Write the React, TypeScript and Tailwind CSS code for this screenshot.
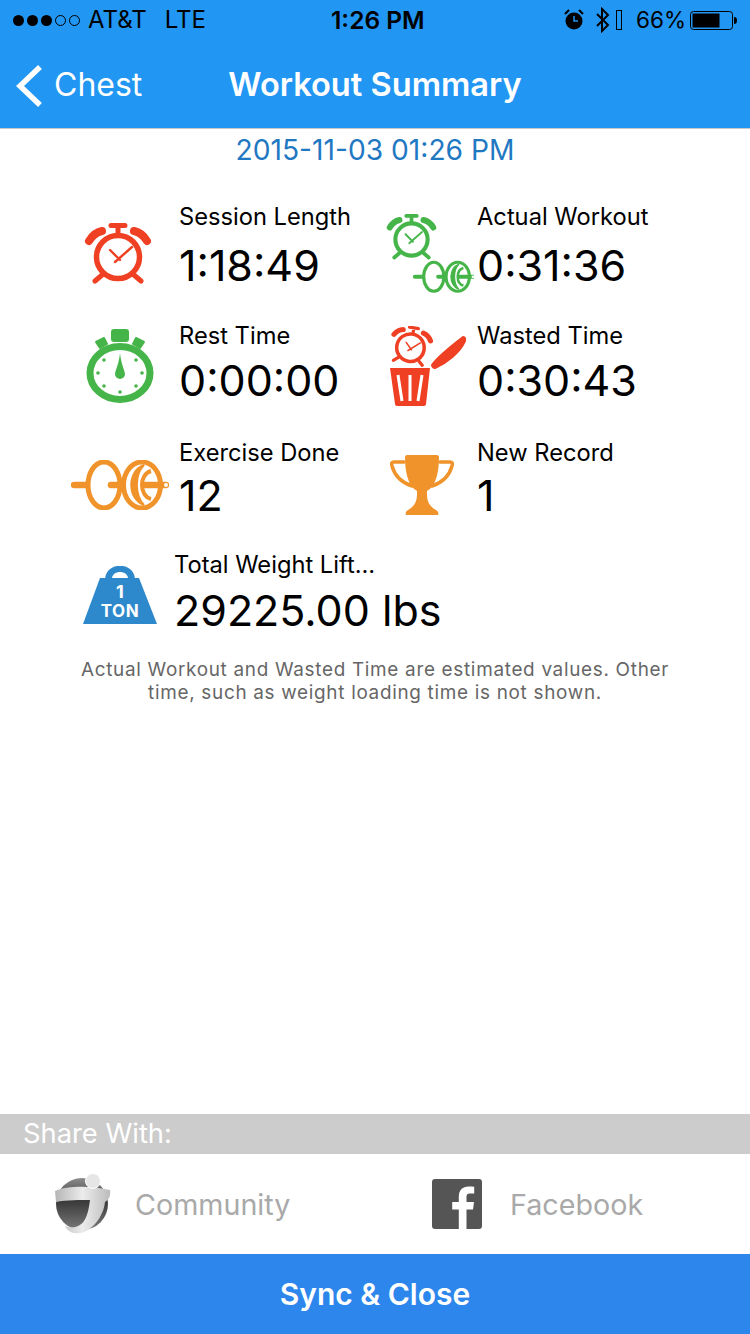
import type { ReactNode } from 'react';

const FONT = "font-['Inter','Noto_Sans',sans-serif]";

function AlarmClock({ color }: { color: string }) {
  return (
    <g>
      <circle cx="34" cy="34" r="21.5" fill="#fff" stroke={color} strokeWidth="5.5" />
      <path d="M5 18 C8 13 13 9 18 8" fill="none" stroke={color} strokeWidth="8" strokeLinecap="round" />
      <path d="M63 18 C60 13 55 9 50 8" fill="none" stroke={color} strokeWidth="8" strokeLinecap="round" />
      <path d="M34 12 V3 M27 2.5 H41" stroke={color} strokeWidth="5" strokeLinecap="round" fill="none" />
      <path d="M18 52 L11 58 M50 52 L57 58" stroke={color} strokeWidth="5" strokeLinecap="round" />
      <path d="M26 27 L36 37 M31 39 L48 24" stroke={color} strokeWidth="2.4" strokeLinecap="round" fill="none" />
    </g>
  );
}

function Barbell({ color }: { color: string }) {
  return (
    <g fill="none" stroke={color}>
      <path d="M3 25 H18" strokeWidth="6.5" strokeLinecap="round" />
      <ellipse cx="33" cy="25" rx="16" ry="23" strokeWidth="5" fill="#fff" />
      <path d="M40 25 H55" strokeWidth="6.5" strokeLinecap="round" />
      <ellipse cx="71" cy="25" rx="18.5" ry="23" strokeWidth="5" fill="#fff" />
      <path d="M73 5 C56 11 56 39 73 45 C64 36 63 15 73 5Z" fill={color} strokeWidth="2" />
      <path d="M80 11 C68 14 68 36 80 39" strokeWidth="4" />
      <path d="M74 25 H95" strokeWidth="6.5" strokeLinecap="round" />
      <circle cx="95" cy="25" r="2" fill="#fff" stroke="none" />
    </g>
  );
}

function SessionIcon() {
  return (
    <svg width="68" height="61" viewBox="0 0 68 61">
      <AlarmClock color="#ef4023" />
    </svg>
  );
}

function ActualIcon() {
  return (
    <svg width="88" height="79" viewBox="0 0 88 79">
      <g transform="scale(0.75)">
        <AlarmClock color="#46b549" />
      </g>
      <g transform="translate(27,47) scale(0.63)">
        <Barbell color="#46b549" />
      </g>
    </svg>
  );
}

function RestIcon() {
  return (
    <svg width="68" height="74" viewBox="0 0 68 74">
      <rect x="25" y="0" width="18" height="13" rx="3" fill="#46b549" />
      <path d="M10 13 L18 9 L21 15 L14 19Z M58 13 L50 9 L47 15 L54 19Z" fill="#46b549" stroke="#46b549" strokeWidth="2" strokeLinejoin="round" />
      <ellipse cx="34" cy="44" rx="30" ry="26.5" fill="none" stroke="#46b549" strokeWidth="7" />
      <path d="M34 24 C35 35 39 42 39 45 A5 5 0 0 1 29 45 C29 42 33 35 34 24Z" fill="#46b549" />
      {[[18, 31], [50, 31], [12, 44], [56, 44], [18, 57], [50, 57], [34, 63]].map(([x, y]) => (
        <circle key={`${x}-${y}`} cx={x} cy={y} r="1.8" fill="#46b549" />
      ))}
    </svg>
  );
}

function WastedIcon() {
  return (
    <svg width="78" height="80" viewBox="0 0 78 80">
      <g transform="translate(1,0) rotate(10 22 20) scale(0.64)">
        <AlarmClock color="#ef4023" />
      </g>
      <path d="M44 39 C48 33 62 21 75 11 C77 11 78 13 77 15 C72 26 60 36 47 42 C45 42 44 40 44 39Z" fill="#ef4023" stroke="#ef4023" strokeWidth="2" />
      <path d="M2 42 H42 L38 78 C38 79 37 80 36 80 H9 C8 80 7 79 7 78Z" fill="#ef4023" />
      <path d="M10 49 L14 75 M22 49 V75 M34 49 L30 75" stroke="#fff" strokeWidth="3" />
    </svg>
  );
}

function BarbellIcon() {
  return (
    <svg width="98" height="50" viewBox="0 0 98 50">
      <Barbell color="#f0932b" />
    </svg>
  );
}

function TrophyIcon() {
  return (
    <svg width="64" height="60" viewBox="0 0 64 60">
      <path d="M14 7 H4 C2 7 1 8 2 11 C5 22 13 28 22 31 M50 7 H60 C62 7 63 8 62 11 C59 22 51 28 42 31" fill="none" stroke="#f0932b" strokeWidth="3.5" strokeLinecap="round" />
      <path d="M15 2 C15 1 16 0 17 0 H47 C48 0 49 1 49 2 C49 17 46 31 37 36 L37 39 C37 46 39 51 46 55 C48 56 49 58 48 60 H16 C15 58 16 56 18 55 C25 51 27 46 27 39 L27 36 C18 31 15 17 15 2Z" fill="#f0932b" />
    </svg>
  );
}

function WeightIcon() {
  return (
    <svg width="74" height="58" viewBox="0 0 74 58">
      <path d="M22 14 C22 -5 52 -5 52 14Z" fill="#2d89cc" />
      <path d="M17 12 H56 L74 58 H0Z" fill="#2d89cc" />
      <path d="M29 12 C30 4 44 4 45 12Z" fill="#fff" />
      <text x="37" y="32" textAnchor="middle" fontFamily="Inter, sans-serif" fontWeight="700" fontSize="18" fill="#fff">1</text>
      <text x="37" y="51" textAnchor="middle" fontFamily="Inter, sans-serif" fontWeight="700" fontSize="17" letterSpacing="0.5" fill="#fff">TON</text>
    </svg>
  );
}

function CommunityLogo() {
  return (
    <svg width="58" height="62" viewBox="0 0 58 62">
      <defs>
        <linearGradient id="ball" x1="0" y1="0" x2="0" y2="1">
          <stop offset="0" stopColor="#8c8c8c" />
          <stop offset="0.45" stopColor="#3a3a3a" />
          <stop offset="1" stopColor="#7a7a7a" />
        </linearGradient>
        <linearGradient id="band" x1="0" y1="0" x2="1" y2="0">
          <stop offset="0" stopColor="#b5b5b5" />
          <stop offset="0.5" stopColor="#ececec" />
          <stop offset="1" stopColor="#bbbbbb" />
        </linearGradient>
      </defs>
      <circle cx="28" cy="31" r="26" fill="url(#ball)" />
      <path d="M1 18 C14 12 40 13 56 17 C57 22 55 27 51 29 C50 40 43 51 34 57 C27 62 15 62 11 53 C18 56 26 54 30 48 C34 42 35 34 36 27 C26 27 12 27 2 29Z" fill="url(#band)" />
      <circle cx="39" cy="8" r="7.5" fill="#e6e6e6" stroke="#fff" />
    </svg>
  );
}

function FacebookLogo() {
  return (
    <svg width="50" height="50" viewBox="0 0 50 50">
      <rect width="50" height="50" rx="3" fill="#555" />
      <path d="M34.5 50 V30.6 H41 L42 23 H34.5 V18.2 C34.5 16 35.1 14.5 38.2 14.5 H42.2 V7.8 C41.5 7.7 39.2 7.5 36.5 7.5 C30.8 7.5 26.8 11 26.8 17.4 V23 H20.2 V30.6 H26.8 V50Z" fill="#fff" />
    </svg>
  );
}

function Stat({ icon, iconBox, label, value, valueGap, className }: { icon: ReactNode; iconBox: string; label: string; value: string; valueGap: string; className: string }) {
  return (
    <div className={`flex ${className}`}>
      <div className={`flex shrink-0 items-center justify-start ${iconBox}`}>{icon}</div>
      <div className="flex min-w-0 flex-col">
        <span className="text-[23.7px] leading-[30px] whitespace-nowrap text-black">{label}</span>
        <span className={`text-[43px] leading-[54px] whitespace-nowrap text-black ${valueGap}`}>{value}</span>
      </div>
    </div>
  );
}

export default function App() {
  return (
    <div className={`flex h-[1334px] w-[750px] flex-col overflow-hidden bg-white ${FONT}`}>
      <header className="h-[129px] shrink-0 border-b border-[#c8c8c8] bg-[#2196f3]">
        <div className="relative flex h-[40px] items-center pl-[13px] pr-[12px] text-[24px] text-black">
          <div className="flex items-center gap-[3px]">
            <span className="size-[11px] rounded-full bg-black" />
            <span className="size-[11px] rounded-full bg-black" />
            <span className="size-[11px] rounded-full bg-black" />
            <span className="size-[11px] rounded-full border border-black" />
            <span className="size-[11px] rounded-full border border-black" />
          </div>
          <span className="ml-[8px]">AT&amp;T</span>
          <span className="ml-[18px]">LTE</span>
          <span className="absolute left-[331px] text-[24.5px] font-semibold">1:26 PM</span>
          <div className="ml-auto flex items-center">
            <svg width="20" height="22" viewBox="0 0 20 22">
              <circle cx="10" cy="12" r="8.5" fill="#000" />
              <path d="M10 7 V12 H14" stroke="#2196f3" strokeWidth="1.5" fill="none" />
              <path d="M1 5 L5 1 M19 5 L15 1" stroke="#000" strokeWidth="2" />
            </svg>
            <svg width="16" height="26" viewBox="0 0 16 26" className="ml-[11px]">
              <path d="M2 7 L13 18 L7 24 V2 L13 8 L2 19" fill="none" stroke="#000" strokeWidth="2" />
            </svg>
            <span className="ml-[5px] h-[20px] w-[6px] border border-black" />
            <span className="ml-[14px] text-[22.5px]">66%</span>
            <svg width="48" height="22" viewBox="0 0 48 22" className="ml-[4px]">
              <rect x="0.5" y="2.5" width="42" height="18" rx="3" fill="none" stroke="#000" />
              <rect x="2.5" y="4.5" width="27" height="14" fill="#000" />
              <path d="M44 8 C46 8 47 9 47 11.5 C47 14 46 15 44 15Z" fill="#000" />
            </svg>
          </div>
        </div>
        <div className="relative flex h-[88px] items-center text-[32px] text-white">
          <svg width="28" height="44" viewBox="0 0 28 44" className="ml-[15px] mt-[3px]">
            <path d="M25 3 L5 22 L25 41" fill="none" stroke="#fff" strokeWidth="5.5" />
          </svg>
          <span className="ml-[11px] mt-[1px]">Chest</span>
          <span className="absolute left-0 right-0 text-center text-[32.6px] font-semibold">Workout Summary</span>
        </div>
      </header>

      <main className="flex-1">
        <p className="mt-[4px] text-center text-[28.2px] leading-[34px] text-[#1f78c2]">2015-11-03 01:26 PM</p>

        <div className="mt-[35px] grid grid-cols-[308px_1fr] gap-y-[6px] pl-[70px]">
          <Stat className="h-[113px]" valueGap="mt-[6px]" iconBox="w-[109px] h-[102px] pl-[14px]" icon={<SessionIcon />} label="Session Length" value="1:18:49" />
          <Stat className="h-[113px]" valueGap="mt-[6px]" iconBox="w-[99px] h-[102px] pl-[8px]" icon={<ActualIcon />} label="Actual Workout" value="0:31:36" />
          <Stat className="h-[111px]" valueGap="mt-[2px]" iconBox="w-[109px] h-[90px] pl-[16px]" icon={<RestIcon />} label="Rest Time" value="0:00:00" />
          <Stat className="h-[111px]" valueGap="mt-[2px]" iconBox="w-[99px] h-[90px] pl-[10px]" icon={<WastedIcon />} label="Wasted Time" value="0:30:43" />
          <Stat className="h-[106px]" valueGap="mt-0" iconBox="w-[109px] h-[94px] pl-[1px]" icon={<BarbellIcon />} label="Exercise Done" value="12" />
          <Stat className="h-[106px]" valueGap="mt-0" iconBox="w-[99px] h-[94px] pl-[12px]" icon={<TrophyIcon />} label="New Record" value="1" />
          <Stat className="col-span-2 h-[90px]" valueGap="mt-[3px]" iconBox="w-[104px] h-[90px] pl-[13px]" icon={<WeightIcon />} label="Total Weight Lift..." value="29225.00 lbs" />
        </div>

        <p className="mx-auto mt-[18px] w-[620px] text-center text-[18.9px] leading-[23px] tracking-[0.7px] text-[#666]">
          Actual Workout and Wasted Time are estimated values. Other
          <br />
          time, such as weight loading time is not shown.
        </p>
      </main>

      <div className="flex h-[40px] shrink-0 items-center bg-[#cccccc] pl-[23px] pt-[1px] text-[27.3px] text-white">Share With:</div>
      <div className="flex h-[100px] shrink-0 items-center bg-white text-[28.7px] text-[#a9a9a9]">
        <div className="flex w-[432px] items-center pl-[54px]">
          <CommunityLogo />
          <span className="ml-[23px] mt-[1px]">Community</span>
        </div>
        <div className="flex items-center">
          <FacebookLogo />
          <span className="ml-[28px] mt-[1px]">Facebook</span>
        </div>
      </div>
      <button className="h-[80px] shrink-0 bg-[#2c86ec] text-[30px] font-semibold text-white">Sync &amp; Close</button>
    </div>
  );
}
